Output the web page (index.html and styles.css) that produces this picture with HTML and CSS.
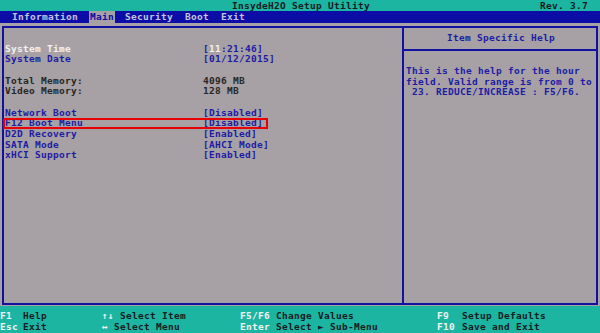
FILE: index.html
```html
<!DOCTYPE html>
<html>
<head>
<meta charset="utf-8">
<link rel="stylesheet" href="styles.css">
</head>
<body>
<div class="screen">
  <div class="titlebar">
    <span class="title">InsydeH2O Setup Utility</span>
    <span class="rev">Rev. 3.7</span>
  </div>
  <div class="tabs">
    <span class="tab">Information</span>
    <span class="tab active">Main</span>
    <span class="tab">Security</span>
    <span class="tab">Boot</span>
    <span class="tab">Exit</span>
  </div>
  <div class="main">
    <div class="frame">
      <div class="settings">
        <div class="row"><span class="label sel">System Time</span><span class="value">[<span class="white">11</span>:21:46]</span></div>
        <div class="row"><span class="label">System Date</span><span class="value">[01/12/2015]</span></div>
        <div class="row blank"></div>
        <div class="row info"><span class="label">Total Memory:</span><span class="value">4096 MB</span></div>
        <div class="row info"><span class="label">Video Memory:</span><span class="value">128 MB</span></div>
        <div class="row blank"></div>
        <div class="row"><span class="label">Network Boot</span><span class="value">[Disabled]</span></div>
        <div class="row marked"><span class="label">F12 Boot Menu</span><span class="value">[Disabled]</span></div>
        <div class="row"><span class="label">D2D Recovery</span><span class="value">[Enabled]</span></div>
        <div class="row"><span class="label">SATA Mode</span><span class="value">[AHCI Mode]</span></div>
        <div class="row"><span class="label">xHCI Support</span><span class="value">[Enabled]</span></div>
      </div>
      <div class="help">
        <div class="help-head">Item Specific Help</div>
        <div class="help-body">This is the help for the hour<br>field. Valid range is from 0 to<br>&nbsp;23. REDUCE/INCREASE : F5/F6.</div>
      </div>
    </div>
  </div>
  <div class="footer">
    <div class="frow">
      <span class="k c1">F1</span><span class="d c2">Help</span>
      <span class="c3"><span class="k">↑↓</span> <span class="d">Select Item</span></span>
      <span class="k c4">F5/F6</span><span class="d c5">Change Values</span>
      <span class="k c6">F9</span><span class="d c7">Setup Defaults</span>
    </div>
    <div class="frow">
      <span class="k c1">Esc</span><span class="d c2">Exit</span>
      <span class="c3"><span class="k">↔</span> <span class="d">Select Menu</span></span>
      <span class="k c4">Enter</span><span class="d c5">Select ► Sub-Menu</span>
      <span class="k c6">F10</span><span class="d c7">Save and Exit</span>
    </div>
  </div>
</div>
</body>
</html>
```

FILE: styles.css
```css
html, body {
  margin: 0;
  padding: 0;
  background: #a7a1a5;
}
.screen {
  width: 600px;
  height: 333px;
  display: flex;
  flex-direction: column;
  font-family: "DejaVu Sans Mono", "Liberation Mono", monospace;
  font-weight: bold;
  font-size: 9.5px;
  letter-spacing: 0.28px;
  background: #a7a1a5;
  overflow: hidden;
}
.titlebar {
  height: 11px;
  line-height: 11px;
  background: #1cb5a1;
  color: #1a1a22;
  display: flex;
  justify-content: center;
  position: relative;
}
.title { margin-left: 2px; }
.rev {
  position: absolute;
  right: 12px;
  top: 0;
}
.tabs {
  height: 12px;
  line-height: 12px;
  background: #0c0ca6;
  color: #c4c4e0;
  display: flex;
  padding-left: 12px;
}
.tab { margin-right: 12px; }
.tab.active {
  background: #a7a1a5;
  color: #0c0ca6;
  padding: 0 1px 0 1px;
  margin-right: 10px;
  margin-left: -1px;
}
.main {
  flex: 1;
  padding: 3px 2px 1px 2px;
  display: flex;
}
.frame {
  flex: 1;
  border: 2px solid #1212a0;
  display: flex;
}
.settings {
  width: 400px;
  border-right: 2px solid #1212a0;
  padding: 15.5px 0 0 1px;
  box-sizing: border-box;
}
.row {
  display: flex;
  height: 10.7px;
  line-height: 10.7px;
  color: #1c1ca4;
  position: relative;
}
.label { width: 198px; }
.label.sel { color: #f2f2f2; }
.white { color: #f2f2f2; }
.row.info { color: #262626; }
.row.marked::after {
  content: "";
  position: absolute;
  left: -2px;
  top: -0.5px;
  width: 265px;
  height: 11.5px;
  border: 2px solid #e80000;
  box-sizing: border-box;
}
.help {
  flex: 1;
  display: flex;
  flex-direction: column;
  color: #1c1ca4;
}
.help-head {
  height: 21px;
  line-height: 19px;
  text-align: center;
  border-bottom: 2px solid #1212a0;
  padding-left: 2px;
}
.help-body {
  padding: 15px 0 0 2px;
  line-height: 10.7px;
  white-space: nowrap;
}
.footer {
  height: 27px;
  background: #1cb5a1;
  padding-top: 4px;
  box-sizing: border-box;
}
.frow {
  height: 11px;
  line-height: 11px;
  display: flex;
}
.k { color: #f2f2f2; }
.d { color: #1a1a22; }
.c1 { width: 23px; }
.c2 { width: 79px; }
.c3 { width: 138px; }
.c4 { width: 36px; }
.c5 { width: 161px; }
.c6 { width: 25px; }
```
